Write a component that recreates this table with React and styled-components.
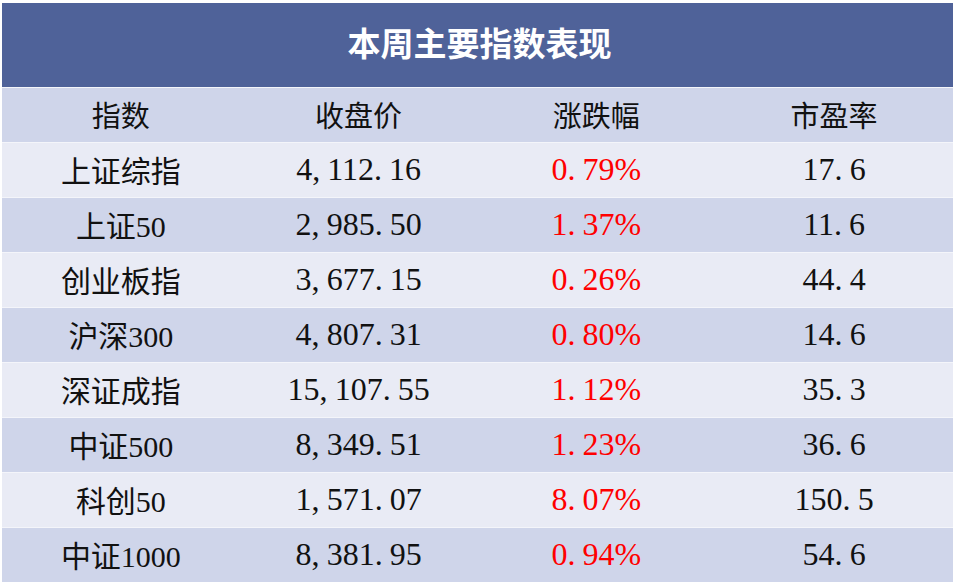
import React from 'react'
import styled, { createGlobalStyle } from 'styled-components'

const GlobalStyle = createGlobalStyle`
  html, body {
    margin: 0;
    padding: 0;
    background: #ffffff;
  }
`

const rows = [
  { name: '上证综指', close: '4,112.16', change: '0.79%', pe: '17.6' },
  { name: '上证50', close: '2,985.50', change: '1.37%', pe: '11.6' },
  { name: '创业板指', close: '3,677.15', change: '0.26%', pe: '44.4' },
  { name: '沪深300', close: '4,807.31', change: '0.80%', pe: '14.6' },
  { name: '深证成指', close: '15,107.55', change: '1.12%', pe: '35.3' },
  { name: '中证500', close: '8,349.51', change: '1.23%', pe: '36.6' },
  { name: '科创50', close: '1,571.07', change: '8.07%', pe: '150.5' },
  { name: '中证1000', close: '8,381.95', change: '0.94%', pe: '54.6' },
]

const Page = styled.div`
  padding: 3px 0 0 2px;
`

const Table = styled.div`
  width: 951px;
  display: flex;
  flex-direction: column;
  gap: 1px;
  background: #f4f5fa;
`

const TitleBar = styled.div`
  height: 84px;
  background: #4f6299;
  color: #ffffff;
  display: flex;
  align-items: center;
  justify-content: center;
  font-family: "Noto Sans CJK SC", "Noto Sans", sans-serif;
  font-weight: 700;
  font-size: 33px;
  padding: 0 0 6px 4px;
  box-sizing: border-box;
`

const Row = styled.div`
  height: 54px;
  display: grid;
  grid-template-columns: repeat(4, 1fr);
  align-items: center;
  background: ${(p) => (p.$shade ? '#cfd5ea' : '#e9ebf5')};
  font-family: "Liberation Serif", "Noto Sans CJK SC", serif;
  font-size: 30px;
  color: #111111;
`

const Cell = styled.div`
  text-align: center;
  color: ${(p) => (p.$red ? '#ff0000' : 'inherit')};
  font-size: ${(p) => (p.$num ? '32px' : '30px')};
  padding-bottom: 2px;
`

const HeadCell = styled(Cell)`
  font-family: "Noto Sans CJK SC", sans-serif;
  font-size: 29px;
`

const Punct = styled.span`
  margin-right: 0.22em;
`

function Num({ value }) {
  const parts = value.split(/([,.])/)
  return (
    <>
      {parts.map((p, i) =>
        p === ',' || p === '.' ? <Punct key={i}>{p}</Punct> : <span key={i}>{p}</span>
      )}
    </>
  )
}

export default function App() {
  return (
    <>
      <GlobalStyle />
      <Page>
        <Table>
          <TitleBar>本周主要指数表现</TitleBar>
          <Row $shade>
            <HeadCell>指数</HeadCell>
            <HeadCell>收盘价</HeadCell>
            <HeadCell>涨跌幅</HeadCell>
            <HeadCell>市盈率</HeadCell>
          </Row>
          {rows.map((r, i) => (
            <Row key={r.name} $shade={i % 2 === 1}>
              <Cell>{r.name}</Cell>
              <Cell $num><Num value={r.close} /></Cell>
              <Cell $num $red><Num value={r.change} /></Cell>
              <Cell $num><Num value={r.pe} /></Cell>
            </Row>
          ))}
        </Table>
      </Page>
    </>
  )
}
